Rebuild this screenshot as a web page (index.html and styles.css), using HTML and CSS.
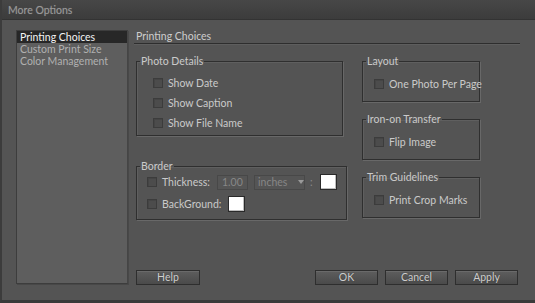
FILE: index.html
```html
<!DOCTYPE html>
<html>
<head>
<meta charset="utf-8">
<link rel="stylesheet" href="styles.css">
</head>
<body>
<div class="window">
  <div class="titlebar">More Options</div>
  <div class="content">
    <ul class="sidebar">
      <li class="item selected">Printing Choices</li>
      <li class="item">Custom Print Size</li>
      <li class="item">Color Management</li>
    </ul>
    <div class="main">
      <div class="header">Printing Choices</div>
      <div class="groups">
        <div class="col-left">
          <fieldset class="group photo">
            <legend>Photo Details</legend>
            <div class="rows">
              <div class="row"><span class="cb"></span>Show Date</div>
              <div class="row"><span class="cb"></span>Show Caption</div>
              <div class="row"><span class="cb"></span>Show File Name</div>
            </div>
          </fieldset>
          <fieldset class="group border">
            <legend>Border</legend>
            <div class="rows">
              <div class="brow">
                <span class="cb"></span><span class="lbl thick">Thickness:</span>
                <span class="input">1.00</span>
                <span class="select">inches <span class="arrow"></span></span>
                <span class="colon">:</span>
                <span class="swatch"></span>
              </div>
              <div class="brow">
                <span class="cb"></span><span class="lbl bg">BackGround:</span>
                <span class="swatch"></span>
              </div>
            </div>
          </fieldset>
        </div>
        <div class="col-right">
          <fieldset class="group side">
            <legend>Layout</legend>
            <div class="rows"><div class="row"><span class="cb"></span>One Photo Per Page</div></div>
          </fieldset>
          <fieldset class="group side">
            <legend>Iron-on Transfer</legend>
            <div class="rows"><div class="row"><span class="cb"></span>Flip Image</div></div>
          </fieldset>
          <fieldset class="group side">
            <legend>Trim Guidelines</legend>
            <div class="rows"><div class="row"><span class="cb"></span>Print Crop Marks</div></div>
          </fieldset>
        </div>
      </div>
      <div class="buttons">
        <button class="btn help">Help</button>
        <span class="spacer"></span>
        <button class="btn">OK</button>
        <button class="btn">Cancel</button>
        <button class="btn">Apply</button>
      </div>
    </div>
  </div>
</div>
</body>
</html>
```
FILE: styles.css
```css
* { box-sizing: border-box; }
html, body { margin: 0; padding: 0; }
body {
  width: 535px;
  height: 303px;
  overflow: hidden;
  background: #3a3a3a;
  font-family: "Lato", "Noto Sans", sans-serif;
  font-size: 10.5px;
  color: #cacaca;
}
.window {
  width: 535px;
  height: 303px;
  display: flex;
  flex-direction: column;
  border-left: 2px solid #3c3c3c;
  border-bottom: 3px solid #3a3a3a;
}
.titlebar {
  height: 20px;
  line-height: 20px;
  padding-left: 6px;
  background: linear-gradient(#474747, #3c3c3c);
  color: #999;
  font-size: 10.5px;
  text-shadow: 0 0 1px #666;
  border-bottom: 1px solid #333;
}
.content {
  flex: 1;
  display: flex;
  gap: 6px;
  padding: 10px 15px 0 14px;
  background: #545454;
}
.sidebar {
  list-style: none;
  margin: 0;
  padding: 0;
  width: 112px;
  height: 254px;
  background: #5e5e5e;
  border: 1px solid #3d3d3d;
  border-right-color: #454545;
  box-shadow: 1px 1px 0 #484848;
}
.item {
  height: 12px;
  line-height: 12px;
  padding-left: 3px;
  color: #b0b0b0;
  white-space: nowrap;
}
.item.selected {
  background: #272727;
  color: #f4f4f4;
}
.main {
  width: 386px;
  height: 255px;
  display: flex;
  flex-direction: column;
}
.header {
  height: 14px;
  line-height: 13px;
  padding-left: 2px;
  color: #cdcdcd;
  border-bottom: 1px solid #2e2e2e;
  box-shadow: 0 1px 0 #5e5e5e;
}
.groups {
  display: flex;
  margin-top: 11px;
}
.col-left {
  width: 210px;
  margin-left: 2px;
  display: flex;
  flex-direction: column;
}
.col-right {
  width: 118px;
  margin-left: 16px;
  display: flex;
  flex-direction: column;
  gap: 11px;
}
fieldset.group {
  margin: 0;
  padding: 0;
  border: 1px solid #2f2f2f;
  box-shadow: 1px 1px 0 #686868, inset 1px 1px 0 #5f5f5f;
  min-width: 0;
}
legend {
  margin-left: 3px;
  padding: 0 1px;
  line-height: 12px;
  height: 12px;
  color: #cacaca;
}
.photo {
  width: 207px;
  margin-left: 1px;
}
.photo .rows { padding: 6px 0 2px 16px; }
.row {
  height: 20px;
  display: flex;
  align-items: center;
  white-space: nowrap;
}
.cb {
  width: 10px;
  height: 10px;
  background: #4c4c4c;
  border: 1px solid #3c3c3c;
  box-shadow: inset 1px 1px 0 #454545;
  margin-right: 5px;
  flex: none;
}
fieldset.border {
  width: 211px;
  margin-top: 24px;
}
.border .rows { padding: 2px 0 7px 10px; }
.brow {
  height: 16px;
  display: flex;
  align-items: center;
  white-space: nowrap;
}
.brow + .brow { margin-top: 6px; }
.lbl { color: #cacaca; flex: none; }
.thick { width: 55px; }
.bg { width: 66px; }
.input {
  width: 31px;
  height: 15px;
  line-height: 13px;
  padding-left: 4px;
  background: #555;
  border: 1px solid #484848;
  color: #878787;
}
.select {
  width: 51px;
  height: 15px;
  line-height: 13px;
  margin-left: 6px;
  padding-left: 3px;
  background: #555;
  border: 1px solid #484848;
  color: #878787;
  display: flex;
  align-items: center;
}
.arrow {
  margin-left: 11px;
  width: 0;
  height: 0;
  border-left: 3px solid transparent;
  border-right: 3px solid transparent;
  border-top: 4px solid #9a9a9a;
}
.colon {
  margin-left: 5px;
  width: 10px;
  color: #8a8a8a;
}
.swatch {
  width: 17px;
  height: 16px;
  flex: none;
  background: #fff;
  border: 1px solid #2a2a2a;
  box-shadow: inset -1px -1px 0 #bdbdbd;
}
.side { width: 118px; }
.side .rows { padding: 7px 0 7px 11px; }
.buttons {
  margin-top: auto;
  display: flex;
  gap: 7px;
  padding: 0 2px;
  height: 15px;
}
.spacer { flex: 1; }
.btn {
  width: 63px;
  height: 15px;
  padding: 0;
  font-family: inherit;
  font-size: 10.5px;
  line-height: 13px;
  color: #cfcfcf;
  background: linear-gradient(#5e5e5e, #4a4a4a);
  border: 1px solid #2e2e2e;
  box-shadow: inset 0 1px 0 #6a6a6a;
  text-shadow: 0 0 1px #333;
}
.help { width: 64px; }
```
